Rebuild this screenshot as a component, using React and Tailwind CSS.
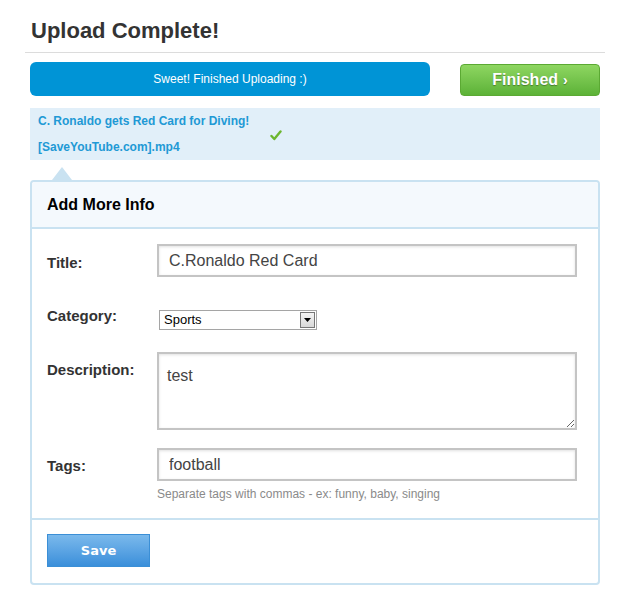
import { useState } from 'react'

const font = { fontFamily: '"Liberation Sans", Arial, sans-serif' }

function Field({ label, labelClass = '', children }) {
  return (
    <div className="flex">
      <div className={`w-[110px] shrink-0 text-[15px] font-bold text-[#333] ${labelClass}`}>{label}</div>
      <div className="flex-1">{children}</div>
    </div>
  )
}

export default function App() {
  const [title, setTitle] = useState('C.Ronaldo Red Card')
  const [desc, setDesc] = useState('test')
  const [tags, setTags] = useState('football')

  const inputClass =
    'w-[420px] h-[33px] border-2 border-[#c4c4c4] bg-white px-[10px] text-[16px] text-[#444] outline-none shadow-[inset_0_1px_3px_rgba(0,0,0,0.12)]'

  return (
    <div className="min-h-screen bg-white" style={font}>
      <div className="ml-[25px] w-[580px] pt-[17px]">
        <h1 className="border-b border-[#dcdcdc] pb-[7px] pl-[6px] text-[22px] font-bold leading-[28px] text-[#333]">
          Upload Complete!
        </h1>

        <div className="mt-[9px] flex items-start px-[5px]">
          <div className="flex h-[34px] w-[400px] items-center justify-center rounded-[6px] bg-[#0094d6] text-[12px] text-white">
            Sweet! Finished Uploading :)
          </div>
          <button className="ml-auto mt-[2px] flex h-[32px] w-[140px] items-center justify-center gap-[5px] rounded-[4px] border border-[#5ba933] bg-gradient-to-b from-[#8ed661] to-[#5cb237] text-[16px] font-bold text-white [text-shadow:0_1px_1px_rgba(0,0,0,0.35)]">
            Finished <span className="text-[14px]">›</span>
          </button>
        </div>

        <div className="mx-[5px] mt-[12px] flex h-[52px] items-center bg-[#e1eff9] pl-[8px] text-[12px] font-bold text-[#2199d5]">
          <div className="w-[232px] leading-[26px]">
            <div>C. Ronaldo gets Red Card for Diving!</div>
            <div>[SaveYouTube.com].mp4</div>
          </div>
          <svg width="12" height="11" viewBox="0 0 12 11" className="mt-[3px]">
            <path d="M1.5 6 L4.3 9 L10.5 1.5" fill="none" stroke="#6cb62f" strokeWidth="2.4" strokeLinecap="round" strokeLinejoin="round" />
          </svg>
        </div>

        <div className="mx-[5px] mt-[7px]">
          <div className="ml-[22px] h-0 w-0 border-x-[10px] border-b-[13px] border-x-transparent border-b-[#c9e2f1]" />
          <div className="rounded-[4px] border-2 border-[#c9e2f1]">
            <div className="flex h-[47px] items-center rounded-t-[3px] border-b-2 border-[#c9e2f1] bg-[#f4f9fd] pl-[15px] text-[16px] font-bold text-black">
              Add More Info
            </div>

            <div className="flex flex-col pb-[15px] pl-[15px] pt-[15px]">
              <Field label="Title:" labelClass="pt-[8px]">
                <input className={inputClass} value={title} onChange={e => setTitle(e.target.value)} />
              </Field>

              <Field label="Category:" labelClass="mt-[28px]">
                <div className="ml-[2px] mt-[33px] flex h-[20px] w-[158px] items-center border border-[#a5a5a5] bg-white text-[13px] text-black">
                  <span className="flex-1 pl-[4px]">Sports</span>
                  <span className="mr-[1px] flex h-[16px] w-[15px] items-center justify-center border border-[#777] bg-gradient-to-b from-[#f4f4f4] to-[#d8d8d8]">
                    <svg width="7" height="4" viewBox="0 0 7 4"><path d="M0 0 H7 L3.5 4 Z" fill="#000" /></svg>
                  </span>
                </div>
              </Field>

              <Field label="Description:" labelClass="mt-[29px]">
                <textarea
                  className="mt-[22px] block h-[78px] w-[420px] resize border-2 border-[#c4c4c4] bg-white px-[8px] pt-[10px] text-[16px] text-[#444] outline-none shadow-[inset_0_1px_3px_rgba(0,0,0,0.12)]"
                  value={desc}
                  onChange={e => setDesc(e.target.value)}
                />
              </Field>

              <Field label="Tags:" labelClass="mt-[25px]">
                <input className={`${inputClass} mt-[18px] block`} value={tags} onChange={e => setTags(e.target.value)} />
                <div className="mt-[4px] text-[12px] text-[#8a8a8a]">Separate tags with commas - ex: funny, baby, singing</div>
              </Field>
            </div>

            <div className="border-t-2 border-[#c9e2f1] pb-[16px] pl-[15px] pt-[14px]">
              <button
                className="flex h-[33px] w-[103px] items-center justify-center border border-[#3b8fd6] bg-gradient-to-b from-[#7ab9ec] to-[#3a8fda] text-[13px] font-bold text-white"
                style={{ fontFamily: '"DejaVu Sans", Verdana, sans-serif' }}
              >
                Save
              </button>
            </div>
          </div>
        </div>
      </div>
    </div>
  )
}
